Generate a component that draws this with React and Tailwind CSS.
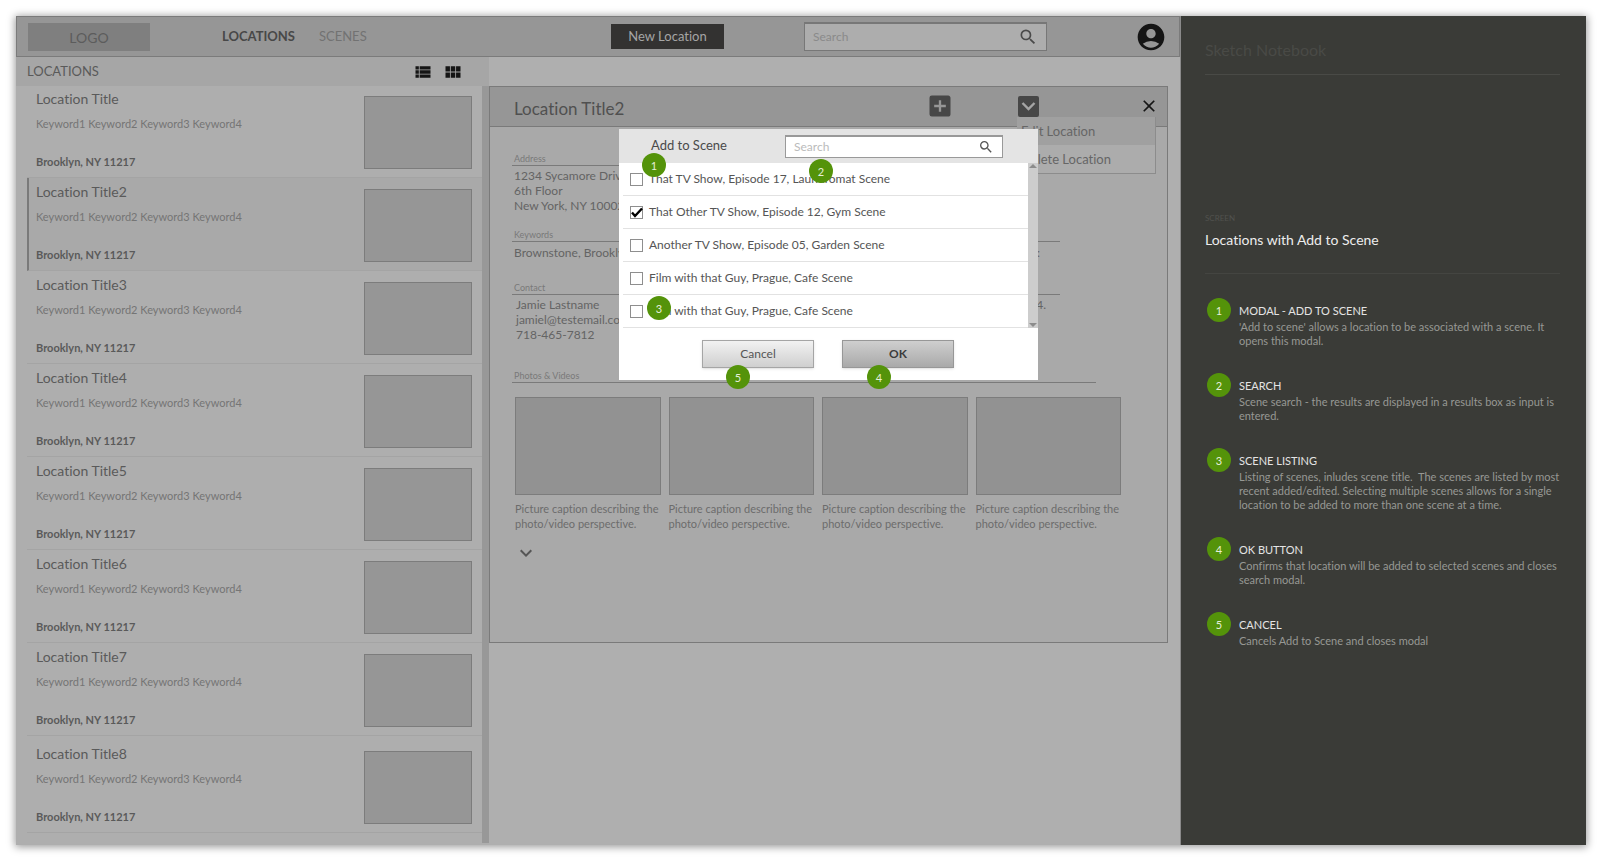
import { useState } from "react";
import {
  MdAccountCircle,
  MdAddBox,
  MdClose,
  MdExpandMore,
  MdSearch,
  MdViewList,
  MdViewModule,
} from "react-icons/md";

const locations = [
  { title: "Location Title", row: "h-[92px] pt-2.5" },
  { title: "Location Title2", row: "h-[93px] pt-[11px]", selected: true },
  { title: "Location Title3", row: "h-[93px] pt-[11px]" },
  { title: "Location Title4", row: "h-[93px] pt-[11px]" },
  { title: "Location Title5", row: "h-[93px] pt-[11px]" },
  { title: "Location Title6", row: "h-[93px] pt-[11px]" },
  { title: "Location Title7", row: "h-[93px] pt-[11px]" },
  { title: "Location Title8", row: "h-[97px] pt-[15px]" },
];

const scenes = [
  "That TV Show, Episode 17, Laundromat Scene",
  "That Other TV Show, Episode 12, Gym Scene",
  "Another TV Show, Episode 05, Garden Scene",
  "Film with that Guy, Prague, Cafe Scene",
  "Film with that Guy, Prague, Cafe Scene",
];

const notes = [
  {
    title: "MODAL - ADD TO SCENE",
    text: "'Add to scene' allows a location to be associated with a scene. It opens this modal.",
  },
  {
    title: "SEARCH",
    text: "Scene search - the results are displayed in a results box as input is entered.",
  },
  {
    title: "SCENE LISTING",
    text: "Listing of scenes, inludes scene title.  The scenes are listed by most recent added/edited. Selecting multiple scenes allows for a single location to be added to more than one scene at a time.",
  },
  {
    title: "OK BUTTON",
    text: "Confirms that location will be added to selected scenes and closes search modal.",
  },
  { title: "CANCEL", text: "Cancels Add to Scene and closes modal" },
];

function Marker({ number, className = "" }) {
  return (
    <span
      className={`flex size-6 shrink-0 items-center justify-center rounded-full bg-[#54930a] text-[11px] leading-none text-[#e6efd9] ${className}`}
    >
      {number}
    </span>
  );
}

function TopBar() {
  return (
    <header className="flex h-[41px] shrink-0 items-center border border-[#7b7b7b] bg-[#969696] pr-3 pl-[11px]">
      <div className="flex h-7 w-[122px] items-center justify-center bg-[#7f7f7f] pt-0.5 text-sm text-[#5c5c5c]">
        LOGO
      </div>
      <nav className="ml-[72px] flex w-[389px] gap-6 text-[13px]">
        <a href="#locations" className="font-bold text-[#484848]">
          LOCATIONS
        </a>
        <a href="#scenes" className="text-[#727272]">
          SCENES
        </a>
      </nav>
      <button className="h-[25px] w-[113px] bg-[#333231] text-[13px] text-[#a5a5a5]">
        New Location
      </button>
      <div className="ml-20 flex h-[29px] w-[243px] items-center border border-t-2 border-[#777] bg-[#adadad] pr-2 pl-2">
        <input
          aria-label="Search"
          placeholder="Search"
          className="min-w-0 flex-1 bg-transparent text-xs text-[#444] outline-none placeholder:text-[#8a8a8a]"
        />
        <MdSearch className="size-5 text-[#4a4a4a]" />
      </div>
      <button aria-label="Account" className="ml-auto">
        <MdAccountCircle className="size-8 text-[#151515]" />
      </button>
    </header>
  );
}

function LocationList() {
  return (
    <aside className="flex w-[473px] shrink-0 flex-col bg-[#aeaeae]">
      <div className="flex h-[29px] shrink-0 items-center bg-[#a6a6a6] pl-[11px]">
        <h2 className="flex-1 text-[13px] text-[#5a5a5a]">LOCATIONS</h2>
        <button aria-label="List view" className="mr-2.5">
          <MdViewList className="size-5 text-[#151515]" />
        </button>
        <button aria-label="Grid view" className="mr-[26px]">
          <MdViewModule className="size-5 text-[#151515]" />
        </button>
      </div>
      <div className="flex flex-1">
        <ul className="flex-1 pl-[11px]">
          {locations.map((item) => (
            <li
              key={item.title}
              className={`flex justify-between border-b border-b-[#a4a4a4] pr-2.5 ${item.row} ${
                item.selected
                  ? "border-l-2 border-l-[#7a7a7a] bg-[#a9a9a9] pl-[7px]"
                  : "pl-[9px]"
              }`}
            >
              <div className="-mt-1.5">
                <h3 className="text-sm leading-[18px] text-[#5a5a5a]">
                  {item.title}
                </h3>
                <p className="mt-2 text-[11px] leading-4 text-[#757575]">
                  Keyword1 Keyword2 Keyword3 Keyword4
                </p>
                <p className="mt-[22px] text-[11px] leading-4 font-bold text-[#5a5a5a]">
                  Brooklyn, NY 11217
                </p>
              </div>
              <div className="h-[73px] w-[108px] border border-[#7c7c7c] bg-[#969696]" />
            </li>
          ))}
        </ul>
        <div className="mb-0.5 w-[7px] bg-[#989898]" />
      </div>
    </aside>
  );
}

function Section({ label, className = "", children }) {
  return (
    <section className={className}>
      <h3 className="border-b border-[#7a7a7a] pl-0.5 text-[9px] leading-3 text-[#797979]">
        {label}
      </h3>
      {children}
    </section>
  );
}

function AddToSceneModal() {
  const [checked, setChecked] = useState([1]);

  function toggle(index) {
    setChecked(
      checked.includes(index)
        ? checked.filter((i) => i !== index)
        : [...checked, index]
    );
  }

  return (
    <div
      role="dialog"
      aria-label="Add to Scene"
      className="absolute top-[42px] left-[129px] w-[419px] bg-white"
    >
      <div className="flex h-[34px] items-center bg-[#e4e4e4] pl-8">
        <h2 className="w-[134px] text-[13px] text-[#4a4a4a]">Add to Scene</h2>
        <div className="flex h-[23px] w-[218px] items-center border border-t-2 border-[#999] bg-white pr-2 pl-2">
          <input
            aria-label="Search scenes"
            placeholder="Search"
            className="min-w-0 flex-1 text-xs text-[#444] outline-none placeholder:text-[#bbb]"
          />
          <MdSearch className="size-4 text-[#555]" />
        </div>
      </div>
      <div className="flex">
        <ul className="flex-1 pl-1">
          {scenes.map((scene, index) => (
            <li key={index} className="h-[33px] border-b border-[#e2e2e2]">
              <label className="flex h-full items-center gap-1.5 pl-[7px] text-xs text-[#555]">
                <span className="relative size-[13px]">
                  <input
                    type="checkbox"
                    checked={checked.includes(index)}
                    onChange={() => toggle(index)}
                    className="block size-[13px] appearance-none border border-[#8e8e8e] bg-white"
                  />
                  {checked.includes(index) && (
                    <svg
                      viewBox="0 0 13 13"
                      className="pointer-events-none absolute inset-0 size-[13px]"
                    >
                      <path
                        d="M2 6.5 5 10 12 2.5"
                        fill="none"
                        stroke="#000"
                        strokeWidth="2.4"
                      />
                    </svg>
                  )}
                </span>
                {scene}
              </label>
            </li>
          ))}
        </ul>
        <div className="flex w-2.5 flex-col justify-between bg-[#cdcdcd]">
          <svg viewBox="0 0 10 6" className="h-1.5 w-2.5 fill-[#8c8c8c]">
            <path d="M1 5 5 1l4 4z" />
          </svg>
          <svg viewBox="0 0 10 6" className="h-1.5 w-2.5 fill-[#8c8c8c]">
            <path d="M1 1h8L5 5z" />
          </svg>
        </div>
      </div>
      <div className="flex justify-center gap-7 py-3 pr-px text-xs">
        <button className="h-7 w-28 border border-[#a5a5a5] bg-linear-to-b from-[#f2f2f2] to-[#cfcfcf] text-[#555] shadow-sm">
          Cancel
        </button>
        <button className="h-7 w-28 border border-[#979797] bg-linear-to-b from-[#cfcfcf] to-[#a9a9a9] font-bold text-[#3c3c3c] shadow-sm">
          OK
        </button>
      </div>
      <Marker number={1} className="absolute top-6 left-[23px]" />
      <Marker number={2} className="absolute top-[30px] left-[190px]" />
      <Marker number={3} className="absolute top-[167px] left-7" />
      <Marker number={5} className="absolute top-[236px] left-[107px]" />
      <Marker number={4} className="absolute top-[236px] left-[248px]" />
    </div>
  );
}

function LocationDetails() {
  return (
    <main className="min-w-0 flex-1 bg-[#afafaf] pt-[29px] pr-3">
      <article className="relative h-[557px] border border-[#7a7a7a] bg-[#a9a9a9]">
        <div className="flex h-10 items-center border-b border-[#7a7a7a] bg-[#969696] pr-2 pb-px pl-6">
          <h1 className="flex-1 pt-1.5 text-[17px] text-[#505050]">
            Location Title2
          </h1>
          <button aria-label="Add to scene" className="mr-[64px]">
            <MdAddBox className="size-7 text-[#474747]" />
          </button>
          <button
            aria-label="More actions"
            className="mr-[100px] flex size-[21px] items-center justify-center rounded-xs bg-[#474747]"
          >
            <svg
              viewBox="0 0 21 21"
              fill="none"
              stroke="#a5a5a5"
              strokeWidth="2.4"
              className="size-[21px]"
            >
              <path d="m4.5 7 6 6 6-6" />
            </svg>
          </button>
          <button aria-label="Close">
            <MdClose className="size-5 text-[#151515]" />
          </button>
        </div>
        <div className="absolute top-[30px] right-[11px] w-[139px] border-r border-b border-[#8c8c8c] text-[13px] text-[#666]">
          <button className="block h-7 w-full bg-[#a0a0a0] pt-0.5 pl-1 text-left">
            Edit Location
          </button>
          <button className="block h-7 w-full bg-[#acacac] pt-0.5 pl-1 text-left">
            Delete Location
          </button>
        </div>

        <div className="pt-[26px] pr-[46px] pl-[22px]">
          <Section label="Address" className="mr-[61px]">
            <p className="pt-0.5 pl-0.5 text-xs leading-[15px] text-[#646464]">
              1234 Sycamore Drive
              <br />
              6th Floor
              <br />
              New York, NY 10002
            </p>
          </Section>
          <Section label="Keywords" className="mt-4 mr-[61px]">
            <p className="flex justify-between pt-0.5 pr-5 pl-0.5 text-xs leading-[17px] text-[#646464]">
              <span>Brownstone, Brooklyn</span>
              <span>:</span>
            </p>
          </Section>
          <Section label="Contact" className="mt-[21px] mr-[61px]">
            <div className="flex justify-between pt-0.5 pr-3.5 pl-1 text-xs leading-[15px] text-[#646464]">
              <p>
                Jamie Lastname
                <br />
                jamiel@testemail.com
                <br />
                718-465-7812
              </p>
              <p>4.</p>
            </div>
          </Section>
          <Section label="Photos & Videos" className="mt-7 mr-[25px]" />
          <div className="mt-3.5 grid grid-cols-4 gap-2 pl-[3px]">
            {[1, 2, 3, 4].map((photo) => (
              <figure key={photo}>
                <div className="h-[98px] border border-[#7c7c7c] bg-[#929292]" />
                <figcaption className="mt-1.5 text-[11px] leading-[15px] text-[#6c6c6c]">
                  Picture caption describing the photo/video perspective.
                </figcaption>
              </figure>
            ))}
          </div>
          <button aria-label="Show more" className="mt-2.5 ml-0.5 block">
            <MdExpandMore className="size-6 text-[#555]" />
          </button>
        </div>
        <AddToSceneModal />
      </article>
    </main>
  );
}

function NotesPanel() {
  return (
    <aside className="w-[405px] shrink-0 bg-[#3a3b37] pt-[22px] pr-[22px] pl-6">
      <h2 className="mr-1 h-[37px] border-b border-[#494a46] text-base leading-6 text-[#494a46]">
        Sketch Notebook
      </h2>
      <p className="mt-[137px] text-[8px] leading-3 text-[#51524e]">SCREEN</p>
      <h1 className="mt-1.5 mr-1 h-11 border-b border-[#444541] text-sm leading-5 text-[#ededed]">
        Locations with Add to Scene
      </h1>
      <ol className="mt-6 space-y-[25px] pl-0.5">
        {notes.map((note, index) => (
          <li key={note.title} className="flex gap-2">
            <Marker number={index + 1} />
            <div className="pt-1">
              <h3 className="text-[11px] leading-[18px] text-[#e4e4e4]">
                {note.title}
              </h3>
              <p className="text-[11px] leading-[14px] whitespace-pre-wrap text-[#979894]">
                {note.text}
              </p>
            </div>
          </li>
        ))}
      </ol>
    </aside>
  );
}

function App() {
  return (
    <div className="min-h-screen bg-white p-4 font-[Lato,sans-serif] [font-variant-ligatures:none]">
      <div className="flex min-h-[829px] shadow-[0_1px_8px_1px_rgba(0,0,0,0.4)]">
        <div className="flex min-w-0 flex-1 flex-col border-r border-[#8a8a8a]">
          <TopBar />
          <div className="flex flex-1">
            <LocationList />
            <LocationDetails />
          </div>
        </div>
        <NotesPanel />
      </div>
    </div>
  );
}

export default App;
